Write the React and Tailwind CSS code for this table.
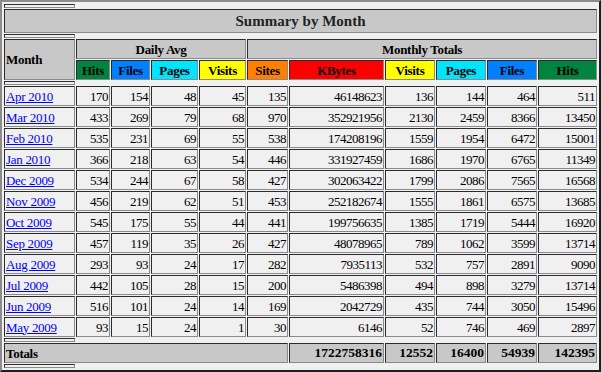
const rows = [
  ["Apr 2010", 170, 154, 48, 45, 135, 46148623, 136, 144, 464, 511],
  ["Mar 2010", 433, 269, 79, 68, 970, 352921956, 2130, 2459, 8366, 13450],
  ["Feb 2010", 535, 231, 69, 55, 538, 174208196, 1559, 1954, 6472, 15001],
  ["Jan 2010", 366, 218, 63, 54, 446, 331927459, 1686, 1970, 6765, 11349],
  ["Dec 2009", 534, 244, 67, 58, 427, 302063422, 1799, 2086, 7565, 16568],
  ["Nov 2009", 456, 219, 62, 51, 453, 252182674, 1555, 1861, 6575, 13685],
  ["Oct 2009", 545, 175, 55, 44, 441, 199756635, 1385, 1719, 5444, 16920],
  ["Sep 2009", 457, 119, 35, 26, 427, 48078965, 789, 1062, 3599, 13714],
  ["Aug 2009", 293, 93, 24, 17, 282, 7935113, 532, 757, 2891, 9090],
  ["Jul 2009", 442, 105, 28, 15, 200, 5486398, 494, 898, 3279, 13714],
  ["Jun 2009", 516, 101, 24, 14, 169, 2042729, 435, 744, 3050, 15496],
  ["May 2009", 93, 15, 24, 1, 30, 6146, 52, 746, 469, 2897],
];

const totals = [1722758316, 12552, 16400, 54939, 142395];

// inset cell border, like an old border=2 table
const cell =
  "border border-solid border-t-[#2b2b2b] border-l-[#2b2b2b] border-b-[#8a8a8a] border-r-[#8a8a8a] p-px";

const head = "text-[13px] font-bold tracking-[-0.3px] leading-none";

const colHeads = [
  ["Hits", "bg-[#00853e]"],
  ["Files", "bg-[#0080ff]"],
  ["Pages", "bg-[#00e4ff]"],
  ["Visits", "bg-[#ffff00]"],
  ["Sites", "bg-[#ff8000]"],
  ["KBytes", "bg-[#ff0000]"],
  ["Visits", "bg-[#ffff00]"],
  ["Pages", "bg-[#00e4ff]"],
  ["Files", "bg-[#0080ff]"],
  ["Hits", "bg-[#00853e]"],
];

const Strip = () => (
  <tr>
    <th className={`${cell} h-[4px] bg-[#f0f0f0]`}></th>
  </tr>
);

export default function App() {
  return (
    <div className="w-[601px] h-[372px] bg-[#f0f0f0] font-['Liberation_Serif',serif] text-black">
      <table className="w-[601px] table-fixed border-separate border-spacing-[1px] p-px border-2 border-solid border-t-[#8c8c8c] border-l-[#8c8c8c] border-b-[#1e1e1e] border-r-[#1e1e1e]">
        <colgroup>
          <col className="w-[71px]" />
          <col className="w-[34px]" />
          <col className="w-[39px]" />
          <col className="w-[47px]" />
          <col className="w-[47px]" />
          <col className="w-[41px]" />
          <col className="w-[95px]" />
          <col className="w-[50px]" />
          <col className="w-[50px]" />
          <col className="w-[50px]" />
          <col className="w-[59px]" />
        </colgroup>
        <tbody>
          <Strip />
          <tr>
            <th colSpan={11} className={`${cell} h-[24px] bg-[#c8c8c8] text-center text-[15px] font-bold leading-none text-[#222]`}>
              Summary by Month
            </th>
          </tr>
          <Strip />
          <tr>
            <th rowSpan={2} className={`${cell} bg-[#c8c8c8] text-left ${head}`}>
              Month
            </th>
            <th colSpan={4} className={`${cell} h-[20px] bg-[#c8c8c8] text-center ${head}`}>
              Daily Avg
            </th>
            <th colSpan={6} className={`${cell} h-[20px] bg-[#c8c8c8] text-center ${head}`}>
              Monthly Totals
            </th>
          </tr>
          <tr>
            {colHeads.map(([label, bg], i) => (
              <th key={i} className={`${cell} h-[20px] ${bg} text-center ${head}`}>
                {label}
              </th>
            ))}
          </tr>
          <Strip />
          {rows.map((r) => (
            <tr key={r[0]}>
              <td className={`${cell} h-[20px] text-left text-[13px] tracking-[-0.3px] leading-none`}>
                <a href="#" className="text-[#0000ff] underline">
                  {r[0]}
                </a>
              </td>
              {r.slice(1).map((v, i) => (
                <td key={i} className={`${cell} h-[20px] text-right text-[13px] tracking-[-0.5px] leading-none`}>
                  {v}
                </td>
              ))}
            </tr>
          ))}
          <Strip />
          <tr>
            <th colSpan={6} className={`${cell} h-[20px] bg-[#c8c8c8] text-left ${head}`}>
              Totals
            </th>
            {totals.map((v, i) => (
              <th key={i} className={`${cell} h-[20px] bg-[#c8c8c8] text-right text-[13.5px] font-bold leading-none`}>
                {v}
              </th>
            ))}
          </tr>
          <Strip />
        </tbody>
      </table>
    </div>
  );
}
